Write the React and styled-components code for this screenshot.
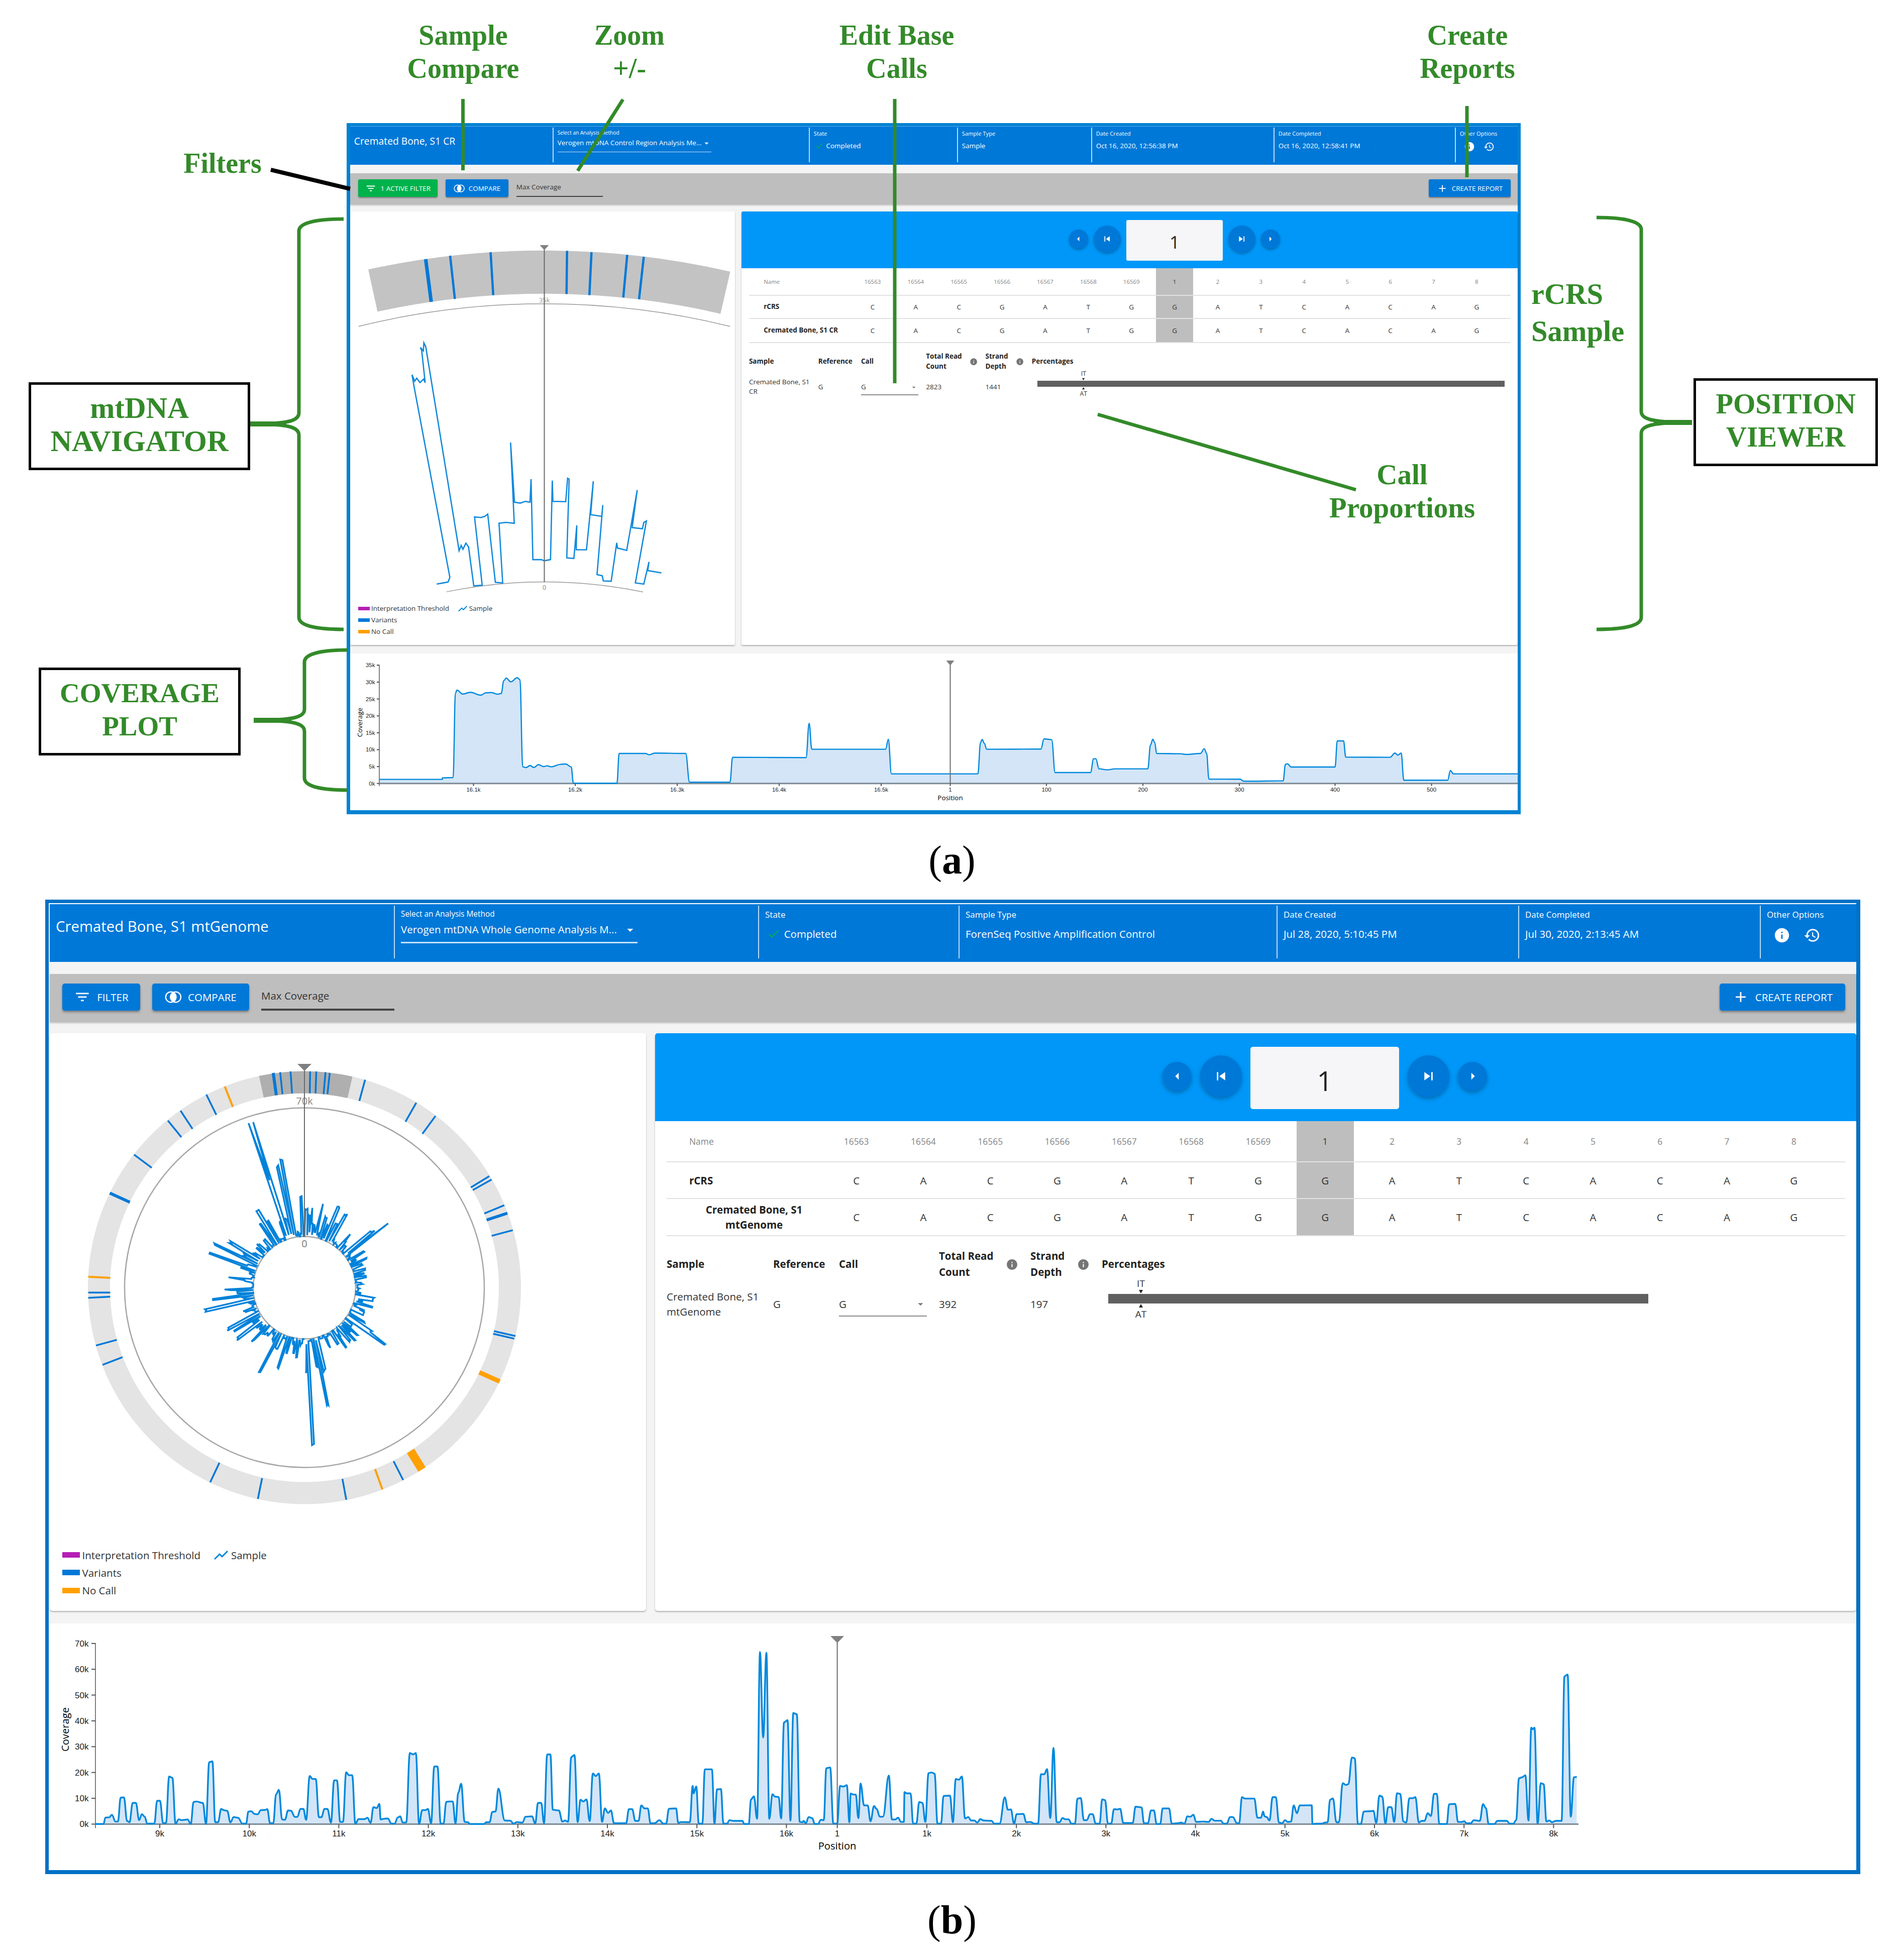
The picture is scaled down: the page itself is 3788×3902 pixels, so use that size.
import React from "react";
import styled, { createGlobalStyle, ThemeProvider } from "styled-components";
import {
  MdAdd,
  MdArrowDropDown,
  MdArrowLeft,
  MdArrowRight,
  MdCheck,
  MdFilterList,
  MdHistory,
  MdInfo,
  MdSkipNext,
  MdSkipPrevious,
} from "react-icons/md";

const BLUE = "#0078d8";
const LINE = "#0088dc";
const ORANGE = "#ffa000";
const GREEN = "#338a29";

// every size in the dashboard is written for the large one and scaled
const u = (n) => (p) => `${(n * p.theme.s).toFixed(2)}px`;

const controlRegion = {
  s: 0.65,
  font: 13.5,
  width: 2337,
  height: 1376,
  border: "6px 6px 8px 7px",
  borderColor: "#0082d2",
  pad: "1px 0 0 0",
  padColor: "#59acea",
  headerHeight: 76,
  headerCols: "403px 510px 295px 267px 363px 361px 1fr",
  gapTop: 17,
  toolbarHeight: 62,
  gapBottom: 14,
  panelHeight: 863,
  panelCols: "766px 1545px",
  panelGap: 13,
  footGap: 17,
  navHeight: 113,
  navPad: 652,
  rows: "55px 46px 48px",
  baseCol: "203px repeat(15, 85.9px)",
  barWidth: 930,
  barPad: 11,
  markAt: 92,
  navigatorView: [697, 421, 766, 779],
  plotView: [697, 1301, 2324, 312],
};

const wholeGenome = {
  s: 1,
  font: 20.5,
  width: 3613,
  height: 1940,
  border: "7px 8px 8px 7px",
  borderColor: "#0071c6",
  pad: "2px 0 0 2px",
  padColor: "#fff",
  headerHeight: 115,
  headerCols: "685px 725px 399px 633px 481px 481px 1fr",
  gapTop: 24,
  toolbarHeight: 96,
  gapBottom: 22,
  panelHeight: 1150,
  panelCols: "1187px 2391px",
  panelGap: 18,
  footGap: 25,
  navHeight: 175,
  navPad: 1010,
  rows: "82px 73px 74px",
  baseCol: "311px repeat(15, 133.3px)",
  barWidth: 1075,
  barPad: 13,
  markAt: 65,
  navigatorView: [99, 2057, 1187, 1021],
  plotView: [99, 3232, 3596, 491],
};

const positions = ["16563", "16564", "16565", "16566", "16567", "16568", "16569", "1", "2", "3", "4", "5", "6", "7", "8"];
const bases = "CACGATGGATCACAG".split("");

const toPoints = (str) => str.trim().split(/\s+/).map((p) => p.split(",").map(Number));
const place = (x0, y0, kx, ky, str) => toPoints(str).map(([x, y]) => [x0 + x * kx, y0 + y * ky]);
const join = (pts) => pts.map(([x, y]) => `${x.toFixed(1)},${y.toFixed(1)}`).join(" ");

// rounds the shoulders of each peak: a flat tangent at every reading
const smooth = (pts) =>
  pts.reduce((d, [x, y], i) => {
    if (!i) return `${x.toFixed(1)} ${y.toFixed(1)}`;
    const [px, py] = pts[i - 1];
    const third = (x - px) * 0.4;
    return `${d}C${(px + third).toFixed(1)} ${py.toFixed(1)} ${(x - third).toFixed(1)} ${y.toFixed(1)} ${x.toFixed(1)} ${y.toFixed(1)}`;
  }, "");

/* ---------- coverage data ---------- */

const regionCoverage = [
  ...place(680, 1270, 0.7653, 0.3333, `98,845 262,845 262,836 290,834 296,330 300,312 315,335 335,325 362,342 375,328 390,326 405,336 415,332 422,255 428,240 440,262 457,238 464,250 471,770 480,774 490,762 500,774 512,757 525,768 535,764 545,770 570,755 583,753 597,770 603,868 716,868 722,690 790,690 800,698 815,688 895,690 905,862 1010,862 1017,713 1208,715 1216,510 1223,665 1415,665 1422,605 1430,812`),
  ...place(1860, 1270, 0.7653, 0.3333, `0,812 113,812 120,625 124,607 130,630 136,665 277,664 285,603 305,608 314,804 406,804 414,722 420,722 428,782 450,788 470,782 555,782 562,640 568,605 573,625 578,690 640,692 655,696 692,690 702,662 708,690 714,843 795,844 805,856 907,854 913,755 918,752 928,771 1042,771 1048,615 1064,615 1070,712 1185,713 1198,688 1205,700 1214,688 1221,850 1335,850 1342,792 1350,812 1517,812`),
];

const genomeCoverage = [
  ...place(80, 3200, 0.7972, 0.3444, `138,1252 158,1252 163,1215 172,1214 179,1199 188,1238 194,1238 201,1100 209,1098 217,1235 223,1242 231,1130 239,1130 247,1230 254,1195 261,1210 267,1250 285,1250 292,1118 299,1118 307,1247 314,1247 322,978 330,985 338,1250 346,1225 353,1230 368,1226 376,1252 383,1125 390,1122 406,1130 414,1252 422,895 430,890 437,1242 444,1242 452,1165 458,1172 467,1176 475,1243 483,1212 494,1216 505,1250 514,1250 520,1180 527,1178 535,1194 543,1196 551,1172 562,1171 567,1166 574,1248 582,1248 589,1080 596,1055 604,1226 611,1228 619,1174 626,1175 636,1211 642,1211 650,1165 657,1165 664,1228 673,975 680,992 688,992 696,1213 702,1213 710,1165 717,1165 726,1244 734,1000 741,1000 749,1240 756,1240 764,953 771,970 779,970 787,1252 795,1224 810,1224 817,1216 825,1245 832,1155 840,1160 847,1136 850,1226 858,1222 868,1220 877,1250 885,1250 893,1214 899,1208 905,1243 914,1243 923,842 931,850 938,842 946,1252 954,1172 962,1172 968,1165 976,1248 984,920 992,920 1000,1250 1007,1250 1014,1124 1022,1122 1030,1122 1037,1250 1044,1070 1051,1020 1060,1240 1068,1242 1073,1252 1108,1252 1114,1242 1122,1242 1129,1182 1137,1180 1144,1047 1160,1232 1174,1233 1182,1250 1190,1241 1204,1244 1212,1210 1228,1208 1236,1250 1243,1130 1251,1130 1258,1248 1266,850 1274,850 1280,1170 1295,1174 1304,1238 1311,1232 1318,1240 1326,865 1334,853 1342,1242 1349,1112 1356,1122 1364,1110 1372,1235 1380,960 1387,975 1395,960 1403,1240 1410,1162 1418,1188 1425,1174 1433,1248 1463,1248 1470,1166 1478,1166 1486,1234 1494,1234 1501,1145 1509,1162 1517,1162 1524,1248 1534,1248 1546,1230 1556,1250`),
  ...place(1250, 3200, 0.6378, 0.3444, `119,1250 128,1164 150,1162 157,1246 165,1241 193,1242 202,1032 205,1075 213,1035 221,1250 232,1250 240,936 262,936 270,1250 278,1052 290,1050 298,1250 309,1250 317,1230 330,1234 357,1234 363,1252 377,1252 384,1110 393,1092 403,1222 412,258 422,752 432,262 441,1222 451,1080 459,1094 470,1096 478,1220 487,665 498,652 507,1232 516,610 527,618 536,1240 545,1242 548,1234 555,1248 564,1212 575,1218 583,1252 593,1252 602,1228 611,1230 619,930 631,925 641,1250 653,1250 662,1032 672,1036 683,1028 691,1242 695,1076 704,1082 711,1082 719,1218 726,1018 737,1145 748,1145 757,1236 768,1148 776,1165 786,1210 796,1210 814,972 824,1226 834,1226 843,1216 852,1240 861,1240 863,1068 870,1075 882,1075 890,1250 900,1250 909,1125 919,1130 928,1240 938,958 948,954 957,962 966,1250 977,1250 985,1090 1005,1088 1014,1242 1023,992 1033,996 1042,978 1052,1220 1062,1212 1071,1232 1081,1232 1090,1244 1100,1224 1110,1232 1135,1234 1143,1250 1160,1250 1176,1098 1186,1170 1195,1168 1205,1250 1213,1195 1234,1194 1243,1242 1256,1240 1268,1250 1280,1250 1289,965 1299,965 1308,935 1318,1218 1328,812 1338,1242 1347,1242 1356,1218 1366,1225 1375,1225 1384,1250 1395,1250 1403,1105 1413,1102 1423,1230 1432,1230 1442,1195 1450,1195 1460,1250 1472,1250 1480,1110 1489,1114 1498,1250 1508,1250 1517,1166 1527,1168 1536,1164 1546,1246 1568,1246`),
  ...place(2200, 3200, 0.7015, 0.3444, `78,1246 86,1152 103,1156 110,1248 121,1248 130,1174 138,1174 146,1252 156,1252 163,1162 181,1162 189,1250 205,1248 215,1244 225,1250 233,1208 242,1210 250,1198 258,1240 278,1238 293,1240 302,1222 310,1233 328,1233 336,1250 345,1250 354,1212 362,1212 374,1248 380,1248 388,1097 396,1105 423,1105 432,1216 442,1216 448,1180 452,1208 458,1212 466,1232 475,1097 484,1097 493,1244 502,1248 510,1230 518,1240 527,1238 535,1145 544,1190 552,1145 586,1144 588,1252 600,1250 615,1250 625,1243 631,1243 638,1112 646,1104 656,1242 663,1242 674,1016 683,1026 690,1022 700,868 708,872 717,1252 725,1252 734,1180 752,1178 761,1176 769,1246 778,1088 786,1094 795,1250 803,1155 812,1155 820,1240 828,1074 837,1078 846,1238 854,1244 863,1103 872,1103 880,1097 890,1244 898,1234 906,1234 915,1190 924,1206 933,1078 941,1078 948,1252 969,1252 976,1138 993,1136 1001,1240 1012,1240 1019,1236 1025,1248 1037,1248 1046,1230 1063,1234 1072,1137 1080,1160 1088,1252 1104,1252 1113,1234 1140,1234 1147,1250 1158,1250 1166,1230 1174,988 1183,982 1192,970 1201,1232 1209,695 1213,704 1218,695 1227,1250 1236,1016 1244,1022 1252,1238 1260,1232 1268,1242 1278,1234 1295,1234 1303,398 1312,388 1321,1210 1330,982 1338,980`),
];

/* ---------- charts ---------- */

const Pointer = ({ x, top, tip, bottom, half }) => (
  <g>
    <line x1={x} x2={x} y1={tip} y2={bottom} stroke="#6b6b6b" strokeWidth="2" />
    <polygon points={`${x - half},${top} ${x + half},${top} ${x},${tip + 1}`} fill="#808080" />
  </g>
);

const CoveragePlot = ({ view, data, base, axisX, endX, yTicks, xTicks, labelX, labelY, titleY, pointer, tick, small, title }) => (
  <PlotSvg viewBox={view.join(" ")} width={view[2]} height={view[3]}>
    <path d={`M${data[0][0]} ${base}L${smooth(data)}V${base}Z`} fill="#d3e5f7" />
    <path d={`M${axisX - tick} ${yTicks[0][0]}H${axisX}V${base + tick}`} fill="none" stroke="#555" strokeWidth="1.5" />
    <line x1={axisX} x2={endX} y1={base} y2={base} stroke="#7f8c96" strokeWidth="3" />
    {yTicks.map(([y, text]) => (
      <g key={text}>
        <line x1={axisX - tick} x2={axisX} y1={y} y2={y} stroke="#555" strokeWidth="2" />
        <TickText x={axisX - tick * 1.7} y={y + small * 0.35} fontSize={small} textAnchor="end">{text}</TickText>
      </g>
    ))}
    {xTicks.map(([x, text]) => (
      <g key={text}>
        <line x1={x} x2={x} y1={base} y2={base + tick} stroke="#555" strokeWidth="2" />
        <TickText x={x} y={labelY + small * 0.36} fontSize={small} textAnchor="middle">{text}</TickText>
      </g>
    ))}
    <path d={`M${smooth(data)}`} fill="none" stroke={LINE} strokeWidth={small > 12 ? 3.4 : 2.4} strokeLinejoin="round" />
    <AxisText x={pointer.x} y={titleY + title * 0.35} fontSize={title} textAnchor="middle">Position</AxisText>
    <AxisText transform={`translate(${labelX[0] + title * 0.3} ${labelX[1]}) rotate(-90)`} fontSize={title} textAnchor="middle">
      Coverage
    </AxisText>
    <Pointer {...pointer} bottom={base} />
  </PlotSvg>
);

const RegionPlot = () => (
  <CoveragePlot
    view={controlRegion.plotView}
    data={regionCoverage}
    base={1559.7}
    axisX={755}
    endX={3021}
    yTicks={["35k", "30k", "25k", "20k", "15k", "10k", "5k", "0k"].map((t, i) => [1324.3 + i * 33.63, t])}
    xTicks={[[942.5, "16.1k"], [1145, "16.2k"], [1348, "16.3k"], [1551, "16.4k"], [1754, "16.5k"], [1891.5, "1"], [2083, "100"], [2275, "200"], [2467, "300"], [2657.5, "400"], [2849.5, "500"]]}
    labelX={[717, 1438]}
    labelY={1572}
    titleY={1588}
    pointer={{ x: 1891.5, top: 1315, tip: 1324, half: 8 }}
    tick={5}
    small={11.5}
    title={13.4}
  />
);

const GenomePlot = () => (
  <CoveragePlot
    view={wholeGenome.plotView}
    data={genomeCoverage}
    base={3631.5}
    axisX={190}
    endX={3142}
    yTicks={["70k", "60k", "50k", "40k", "30k", "20k", "10k", "0k"].map((t, i) => [3271.8 + i * 51.38, t])}
    xTicks={[
      ...["9k", "10k", "11k", "12k", "13k", "14k", "15k", "16k"].map((t, i) => [318 + i * 178.2, t]),
      [1666.6, "1"],
      ...["1k", "2k", "3k", "4k", "5k", "6k", "7k", "8k"].map((t, i) => [1845 + i * 178.2, t]),
    ]}
    labelX={[131, 3443]}
    labelY={3650}
    titleY={3675}
    pointer={{ x: 1666.6, top: 3257, tip: 3270, half: 13.5 }}
    tick={8}
    small={17}
    title={20.2}
  />
);

const polar = (cx, cy, r, deg) => {
  const a = (deg * Math.PI) / 180;
  return [cx + r * Math.sin(a), cy - r * Math.cos(a)];
};

const arc = (cx, cy, r, from, to) => {
  const [x1, y1] = polar(cx, cy, r, from);
  const [x2, y2] = polar(cx, cy, r, to);
  return `M${x1} ${y1}A${r} ${r} 0 0 1 ${x2} ${y2}`;
};

const regionMarks = place(680, 400, 0.523, 0.574, `320,202 341,350 413,190 431,340 567,178 577,327 858,173 856,323 951,178 943,327 1087,187 1072,335 1150,194 1132,341`);
const regionTrace = place(680, 400, 0.523, 0.574, `362,1329 380,1326 405,1322 412,1306 275,640 268,603 278,625 286,615 298,630 312,618 318,630 305,520 300,508 311,520 313,492 320,505 443,1190 447,1213 455,1195 462,1208 473,1187 483,1200 503,1335 535,1333 506,1096 530,1098 545,1094 556,1086 585,1323 613,1325 599,1118 625,1115 657,1118 643,838 658,1045 680,1048 700,1042 717,1045 721,965 728,1244 760,1244 771,1248 795,1244 802,970 804,1042 853,1043 860,962 866,965 857,1238 884,1240 895,1125 893,1210 932,1210 958,972 948,1088 990,1094 994,1055 972,1296 992,1300 996,1318 1026,1319 1047,1186 1050,1204 1085,1212 1125,1003 1106,1133 1145,1137 1150,1115 1160,1110 1118,1325 1150,1329 1170,1252 1165,1282 1217,1290`);

const RegionNavigator = () => {
  const cx = 1083.5;
  const cy = 2143.7;
  const view = controlRegion.navigatorView;
  return (
    <PlotSvg viewBox={view.join(" ")} width={view[2]} height={view[3]}>
      <path d={arc(cx, cy, 1602, -12.3, 13)} fill="none" stroke="#c3c3c3" strokeWidth="86" />
      {regionMarks.filter((_, i) => i % 2 === 0).map(([x, y], i) => (
        <line key={x} x1={x} y1={y} x2={regionMarks[i * 2 + 1][0]} y2={regionMarks[i * 2 + 1][1]} stroke={BLUE} strokeWidth={i ? 4.5 : 7} />
      ))}
      <AxisText x={cx} y="602" fontSize="13" textAnchor="middle" fill="#999">35k</AxisText>
      <path d={arc(cx, cy, 1539, -13.9, 13.9)} fill="none" stroke="#999" strokeWidth="1.5" />
      <path d={arc(cx, cy, 985, -11.4, 11.5)} fill="none" stroke="#999" strokeWidth="1.5" />
      <AxisText x={cx} y="1174" fontSize="13" textAnchor="middle" fill="#888">0</AxisText>
      <polyline points={join(regionTrace)} fill="none" stroke="#1189dc" strokeWidth="2.6" />
      <Pointer x={cx} top={488} tip={497} bottom={1159} half={9} />
    </PlotSvg>
  );
};

// x1,y1 x2,y2 of each mark over the ring
const ringMarks = (str) => place(100, 2060, 0.7653, 0.7526, str);
const variantMarks = ringMarks(`598,99 604,157 625,97 629,155 676,97 675,155 692,97 690,155 716,99 711,157 727,101 721,157 819,119 804,175 952,180 924,230 1002,215 968,262 1142,374 1094,404 1148,383 1099,411 1181,451 1129,473 1203,517 1148,532 1210,797 1154,784 1207,804 1152,791 918,1178 893,1128 770,1230 760,1175 540,1228 551,1173 416,1184 440,1132 136,873 188,853 119,822 173,807 99,696 156,693 99,682 156,682 218,317 264,352 306,227 341,271 339,201 370,249 406,158 432,212`);
const wideVariants = ringMarks(`580,101 588,160 1189,472 1135,490 155,419 207,443`);
const noCallMarks = ringMarks(`454,137 475,191 99,640 156,643 864,1203 845,1149`);
const wideNoCalls = ringMarks(`1116,893 1169,917`);
const widestNoCall = ringMarks(`937,1101 967,1150`);

const MarkSet = ({ marks, color, width }) =>
  marks.filter((_, i) => i % 2 === 0).map(([x, y], i) => (
    <line key={i} x1={x} y1={y} x2={marks[i * 2 + 1][0]} y2={marks[i * 2 + 1][1]} stroke={color} strokeWidth={width} />
  ));

const GenomeNavigator = () => {
  const cx = 606;
  const cy = 2563.5;
  const view = wholeGenome.navigatorView;
  // the same coverage wrapped round the circular genome
  const trace = genomeCoverage.map(([x, y]) =>
    polar(cx, cy, 102 + ((3631.5 - y) / 359.7) * 256, ((x - 1666.6) / 178.2 / 16.569) * 360)
  );
  return (
    <PlotSvg viewBox={view.join(" ")} width={view[2]} height={view[3]}>
      <circle cx={cx} cy={cy} r="409" fill="none" stroke="#e4e4e4" strokeWidth="44" />
      <path d={arc(cx, cy, 409, -12.1, 12.8)} fill="none" stroke="#afafaf" strokeWidth="44" />
      <MarkSet marks={variantMarks} color={BLUE} width={3.5} />
      <MarkSet marks={wideVariants} color={BLUE} width={6} />
      <MarkSet marks={noCallMarks} color={ORANGE} width={4} />
      <MarkSet marks={wideNoCalls} color={ORANGE} width={9} />
      <MarkSet marks={widestNoCall} color={ORANGE} width={17} />
      <circle cx={cx} cy={cy} r="358" fill="none" stroke="#a6a6a6" strokeWidth="2.5" />
      <circle cx={cx} cy={cy} r="102" fill="none" stroke="#a6a6a6" strokeWidth="2.5" />
      <AxisText x={cx} y="2199" fontSize="20" textAnchor="middle" fill="#888">70k</AxisText>
      <AxisText x={cx} y="2482.5" fontSize="20" textAnchor="middle" fill="#777">0</AxisText>
      <polyline points={join(trace)} fill="none" stroke="#0082da" strokeWidth="3.4" />
      <Pointer x={cx} top={2118} tip={2131} bottom={2462} half={14} />
    </PlotSvg>
  );
};

/* ---------- dashboard ---------- */

const CompareIcon = () => (
  <svg viewBox="0 0 32 32" width="1em" height="1em">
    <circle cx="11.5" cy="16" r="9.8" fill="none" stroke="#fff" strokeWidth="2.2" />
    <circle cx="20.500" cy="16" r="9.8" fill="none" stroke="#fff" strokeWidth="2.2" />
    <ellipse cx="16" cy="16" rx="5.4" ry="9" fill="#fff" />
  </svg>
);

const Marker = ({ up }) => (
  <MarkerSvg viewBox="0 0 8 9">
    <path d={up ? "M4 1L8 8H0Z" : "M0 1H8L4 8Z"} fill="#222" />
  </MarkerSvg>
);

const Dashboard = ({ theme, title, method, filterLabel, sampleType, created, completed, sampleName, splitName, reads, depth, Navigator, Plot }) => (
  <ThemeProvider theme={theme}>
    <Frame>
      <Header>
        <Title>{title}</Title>
        <HeaderCell>
          <MethodLabel>Select an Analysis Method</MethodLabel>
          <MethodSelect>
            {method}
            <MdArrowDropDown />
          </MethodSelect>
        </HeaderCell>
        <HeaderCell>
          <Label>State</Label>
          <Value>
            <MdCheck />
            Completed
          </Value>
        </HeaderCell>
        <HeaderCell>
          <Label>Sample Type</Label>
          <Value>{sampleType}</Value>
        </HeaderCell>
        <HeaderCell>
          <Label>Date Created</Label>
          <Value>{created}</Value>
        </HeaderCell>
        <HeaderCell>
          <Label>Date Completed</Label>
          <Value>{completed}</Value>
        </HeaderCell>
        <HeaderCell>
          <Label>Other Options</Label>
          <Options>
            <MdInfo />
            <MdHistory />
          </Options>
        </HeaderCell>
      </Header>

      <Toolbar>
        <Button $green={theme.s < 1} $width={theme.s < 1 ? 243 : 155}>
          <MdFilterList />
          {filterLabel}
        </Button>
        <Button $width={193}>
          <CompareIcon />
          COMPARE
        </Button>
        <ZoomField>Max Coverage</ZoomField>
        <Spacer />
        <Button $width={250}>
          <MdAdd />
          CREATE REPORT
        </Button>
      </Toolbar>

      <Panels>
        <Panel>
          <Navigator />
          <Legend>
            <LegendRow>
              <Swatch $color="#b51fb5" />
              <span>Interpretation Threshold</span>
              <TraceIcon viewBox="0 0 29 18">
                <path d="M1 17L11 7L16 12L27 1" fill="none" stroke={LINE} strokeWidth="3" />
              </TraceIcon>
              <span>Sample</span>
            </LegendRow>
            <LegendRow>
              <Swatch $color={BLUE} />
              <span>Variants</span>
            </LegendRow>
            <LegendRow>
              <Swatch $color={ORANGE} />
              <span>No Call</span>
            </LegendRow>
          </Legend>
        </Panel>

        <Panel>
          <PositionNav>
            <Round $size={58}><MdArrowLeft /></Round>
            <Round $size={83}><MdSkipPrevious /></Round>
            <PositionInput>1</PositionInput>
            <Round $size={83}><MdSkipNext /></Round>
            <Round $size={58}><MdArrowRight /></Round>
          </PositionNav>
          <BaseTable>
            <BaseRow $muted>
              <RowName>Name</RowName>
              {positions.map((p, i) => <Base key={p} $active={i === 7}>{p}</Base>)}
            </BaseRow>
            <BaseRow>
              <RowName $bold>rCRS</RowName>
              {bases.map((b, i) => <Base key={i} $active={i === 7}>{b}</Base>)}
            </BaseRow>
            <BaseRow>
              <RowName $bold $split={splitName}>{sampleName}</RowName>
              {bases.map((b, i) => <Base key={i} $active={i === 7}>{b}</Base>)}
            </BaseRow>
          </BaseTable>
          <Details>
            <DetailHead>
              <span>Sample</span>
              <span>Reference</span>
              <span>Call</span>
              <HeadInfo>Total Read<br />Count<MdInfo /></HeadInfo>
              <HeadInfo>Strand<br />Depth<MdInfo /></HeadInfo>
              <span>Percentages</span>
            </DetailHead>
            <DetailRow>
              <SampleName>{sampleName}</SampleName>
              <span>G</span>
              <CallSelect>G<MdArrowDropDown /></CallSelect>
              <span>{reads}</span>
              <span>{depth}</span>
              <Percentages>
                <Mark><span>IT</span><Marker /></Mark>
                <Bar />
                <Mark><Marker up /><span>AT</span></Mark>
              </Percentages>
            </DetailRow>
          </Details>
        </Panel>
      </Panels>

      <PlotPanel>
        <Plot />
      </PlotPanel>
    </Frame>
  </ThemeProvider>
);

/* ---------- annotations ---------- */

const brace = (end, spine, tip, top, mid, bottom) => {
  const d = Math.sign(end - spine);
  return `M${end} ${top}C${spine + d * 40} ${top} ${spine} ${top + 6} ${spine} ${top + 24}V${mid - 22}C${spine} ${mid - 6} ${spine - d * 22} ${mid} ${tip} ${mid}C${spine - d * 22} ${mid} ${spine} ${mid + 6} ${spine} ${mid + 22}V${bottom - 24}C${spine} ${bottom - 6} ${spine + d * 40} ${bottom} ${end} ${bottom}`;
};

const Callouts = () => (
  <Overlay viewBox="0 0 3788 1640">
    <g fill="none" stroke={GREEN} strokeWidth="7">
      <path d="M921.500 197V339M1240 198L1150 340M1781 197V763M2920 211V353M2185 825L2699 975" />
      <path d={brace(684, 595, 498, 436, 844, 1253)} />
      <path d={brace(692, 606, 505, 1294, 1434, 1573)} />
      <path d={brace(3178, 3267, 3368, 433, 841, 1253)} />
      <path d="M498 844H570M3368 841H3292M505 1434H580" strokeWidth="10" />
    </g>
    <path d="M539 338L697 376" stroke="#000" strokeWidth="8" />
  </Overlay>
);

const App = () => {
  return (
    <Page>
      <Global />
      <FigureA>
        <Dashboard
          theme={controlRegion}
          title="Cremated Bone, S1 CR"
          method="Verogen mtDNA Control Region Analysis Me..."
          filterLabel="1 ACTIVE FILTER"
          sampleType="Sample"
          created="Oct 16, 2020, 12:56:38 PM"
          completed="Oct 16, 2020, 12:58:41 PM"
          sampleName="Cremated Bone, S1 CR"
          reads="2823"
          depth="1441"
          Navigator={RegionNavigator}
          Plot={RegionPlot}
        />
        <Callouts />
        <Note $x={922} $y={37}>Sample<br />Compare</Note>
        <Note $x={1253} $y={37}>Zoom<br />+/-</Note>
        <Note $x={1785} $y={37}>Edit Base<br />Calls</Note>
        <Note $x={2921} $y={37}>Create<br />Reports</Note>
        <Note $x={443} $y={292}>Filters</Note>
        <Note $x={2791} $y={912} $size={57}>Call<br />Proportions</Note>
        <SideNote>rCRS<br />Sample</SideNote>
        <BoxNote $x={57} $y={761} $w={441} $h={175} $size={59}>mtDNA<br />NAVIGATOR</BoxNote>
        <BoxNote $x={77} $y={1329} $w={402} $h={175} $size={55}>COVERAGE<br />PLOT</BoxNote>
        <BoxNote $x={3371} $y={753} $w={367} $h={175} $size={57}>POSITION<br />VIEWER</BoxNote>
      </FigureA>
      <Caption>(<b>a</b>)</Caption>
      <FigureB>
        <Dashboard
          theme={wholeGenome}
          title="Cremated Bone, S1 mtGenome"
          method="Verogen mtDNA Whole Genome Analysis M..."
          filterLabel="FILTER"
          sampleType="ForenSeq Positive Amplification Control"
          created="Jul 28, 2020, 5:10:45 PM"
          completed="Jul 30, 2020, 2:13:45 AM"
          sampleName="Cremated Bone, S1 mtGenome"
          splitName
          reads="392"
          depth="197"
          Navigator={GenomeNavigator}
          Plot={GenomePlot}
        />
      </FigureB>
      <Caption>(<b>b</b>)</Caption>
    </Page>
  );
};

export default App;

const Global = createGlobalStyle`
  * {
    box-sizing: border-box;
  }
  body {
    margin: 0;
    background: #fff;
  }
`;
const Page = styled.div`
  width: 3788px;
  height: 3902px;
  overflow: hidden;
  display: flex;
  flex-direction: column;
`;
const FigureA = styled.div`
  position: relative;
  padding: 245px 0 0 690px;
`;
const FigureB = styled.div`
  padding-left: 90px;
`;
const Caption = styled.div`
  height: 170px;
  padding: 12px 0 0 2px;
  display: flex;
  align-items: center;
  justify-content: center;
  font-family: "Liberation Serif", serif;
  font-size: 80px;
  color: #000;
`;
const Overlay = styled.svg`
  position: absolute;
  left: 0;
  top: 0;
  width: 3788px;
  height: 1640px;
`;
const Note = styled.div`
  position: absolute;
  left: ${(p) => p.$x}px;
  top: ${(p) => p.$y}px;
  transform: translateX(-50%);
  white-space: nowrap;
  text-align: center;
  font: bold ${(p) => p.$size || 56}px/66px "Liberation Serif", serif;
  color: ${GREEN};
`;
const SideNote = styled(Note)`
  left: 3048px;
  top: 549px;
  transform: none;
  text-align: left;
  font-size: 58.5px;
  line-height: 74px;
`;
const BoxNote = styled(Note)`
  display: flex;
  align-items: center;
  justify-content: center;
  transform: none;
  width: ${(p) => p.$w}px;
  height: ${(p) => p.$h}px;
  padding-bottom: 8px;
  border: 5px solid #000;
`;

const Frame = styled.div`
  width: ${(p) => p.theme.width}px;
  height: ${(p) => p.theme.height}px;
  border: solid ${(p) => p.theme.borderColor};
  border-width: ${(p) => p.theme.border};
  padding: ${(p) => p.theme.pad};
  background: linear-gradient(${(p) => p.theme.padColor} 2px, #f4f4f4 2px);
  font-family: "Open Sans", sans-serif;
  font-size: ${(p) => p.theme.font}px;
  color: #333;
`;
const Header = styled.div`
  height: ${(p) => p.theme.headerHeight}px;
  padding: ${u(3)} 0 ${u(7)};
  display: grid;
  grid-template-columns: ${(p) => p.theme.headerCols};
  background: ${BLUE};
  color: #fff;
  white-space: nowrap;
`;
const Title = styled.div`
  padding-left: ${u(12)};
  line-height: ${u(83)};
  font-size: 1.43em;
`;
const HeaderCell = styled.div`
  padding-left: ${u(12)};
  border-left: 2px solid #b9dcf6;
`;
const Label = styled.div`
  height: ${u(36)};
  line-height: ${u(36)};
  font-size: 0.83em;
`;
const MethodLabel = styled(Label)`
  height: ${u(34)};
  line-height: ${u(33)};
  font-size: 0.752em;
`;
const Value = styled.div`
  display: flex;
  align-items: center;
  height: ${u(40)};
  line-height: ${u(40)};

  svg {
    margin: 0 ${u(7)} 0 ${u(3)};
    font-size: 1.35em;
    color: #00b050;
  }
`;
const MethodSelect = styled.div`
  width: ${u(471)};
  height: ${u(41)};
  display: flex;
  justify-content: space-between;
  line-height: ${u(27)};
  border-bottom: ${u(3)} solid #c3e2f8;

  svg {
    font-size: 1.4em;
  }
`;
const Options = styled.div`
  display: flex;
  gap: ${u(26)};
  padding: ${u(6)} 0 0 ${u(13)};
  font-size: ${u(34)};
`;
const Toolbar = styled.div`
  height: ${(p) => p.theme.toolbarHeight}px;
  margin: ${(p) => p.theme.gapTop}px 0 ${(p) => p.theme.gapBottom}px;
  padding: 0 ${u(22)} ${u(4)} ${u(25)};
  display: flex;
  align-items: center;
  gap: ${u(24)};
  background: #bebebe;
  box-shadow: 0 2px 3px rgba(0, 0, 0, 0.2);
`;
const Button = styled.div`
  width: ${(p) => p.$width * p.theme.s}px;
  height: ${u(54)};
  display: flex;
  align-items: center;
  justify-content: center;
  gap: ${u(12)};
  border-radius: ${u(5)};
  background: ${(p) => (p.$green ? "#00b24c" : BLUE)};
  box-shadow: 0 ${u(3)} ${u(4)} rgba(0, 0, 0, 0.35);
  color: #fff;
  white-space: nowrap;

  svg {
    font-size: 1.65em;
  }
`;
const ZoomField = styled.div`
  width: ${u(265)};
  height: ${u(53)};
  padding-bottom: ${u(4)};
  line-height: ${u(47)};
  border-bottom: ${u(4)} solid #444;
`;
const Spacer = styled.div`
  flex: 1;
`;
const Panels = styled.div`
  height: ${(p) => p.theme.panelHeight}px;
  margin-bottom: ${(p) => p.theme.footGap}px;
  display: grid;
  grid-template-columns: ${(p) => p.theme.panelCols};
  gap: ${(p) => p.theme.panelGap}px;
`;
const Panel = styled.div`
  overflow: hidden;
  border-radius: ${u(5)};
  background: #fff;
  box-shadow: 0 2px 3px rgba(0, 0, 0, 0.28);
`;
const PlotPanel = styled.div`
  background: #fff;
`;
const PlotSvg = styled.svg`
  display: block;
`;
const AxisText = styled.text`
  font-family: "Open Sans", sans-serif;
`;
const TickText = styled.text`
  font-family: "Liberation Sans", sans-serif;
  fill: #222;
`;
const Legend = styled.div`
  padding-left: ${u(24.5)};
`;
const LegendRow = styled.div`
  height: ${u(35.3)};
  display: flex;
  align-items: center;
  gap: ${u(5)};
`;
const Swatch = styled.div`
  width: ${u(35)};
  height: ${u(11)};
  background: ${(p) => p.$color};
`;
const TraceIcon = styled.svg`
  width: ${u(29)};
  height: ${u(18)};
  margin-left: ${u(22)};
`;

const PositionNav = styled.div`
  height: ${(p) => p.theme.navHeight}px;
  padding: 0 0 ${u(4)} ${(p) => p.theme.navPad}px;
  display: flex;
  align-items: center;
  gap: ${u(17)};
  background: #0097f8;
`;
const Round = styled.div`
  width: ${(p) => p.$size * p.theme.s}px;
  height: ${(p) => p.$size * p.theme.s}px;
  display: flex;
  align-items: center;
  justify-content: center;
  border-radius: 50%;
  background: ${BLUE};
  box-shadow: 0 ${u(4)} ${u(8)} rgba(0, 0, 0, 0.28);
  color: #fff;
  font-size: ${u(33)};
`;
const PositionInput = styled.div`
  width: ${u(296)};
  height: ${u(124)};
  margin-top: ${u(7)};
  padding-top: ${u(9)};
  display: flex;
  align-items: center;
  justify-content: center;
  border-radius: ${u(5)};
  background: #f6f5f7;
  color: #222;
  font-size: ${u(54)};
`;
const BaseTable = styled.div`
  margin: 0 ${u(22)} 0 ${u(23)};
  display: grid;
  grid-template-rows: ${(p) => p.theme.rows};
`;
const BaseRow = styled.div`
  display: grid;
  grid-template-columns: ${(p) => p.theme.baseCol};
  border-bottom: 2px solid #e2e2e2;
  color: ${(p) => (p.$muted ? "#858585" : "#333")};
  font-size: ${(p) => (p.$muted ? "0.85em" : "1em")};
`;
const RowName = styled.div`
  display: flex;
  align-items: center;
  padding-left: ${(p) => (p.$split ? 62 : 45) * p.theme.s}px;
  padding-right: ${(p) => (p.$split ? 25 : 0)}px;
  text-align: ${(p) => (p.$split ? "center" : "left")};
  font-weight: ${(p) => (p.$bold ? 700 : 400)};
  color: ${(p) => (p.$bold ? "#222" : "inherit")};
  white-space: ${(p) => (p.$split ? "normal" : "nowrap")};
  line-height: ${u(30)};
`;
const Base = styled.div`
  display: flex;
  align-items: center;
  justify-content: center;
  margin: 0 ${u(9.6)};
  background: ${(p) => (p.$active ? "#bebebe" : "none")};
  color: ${(p) => (p.$active ? "#333" : "inherit")};
`;
const Details = styled.div`
  padding: ${u(24)} 0 0 ${u(23)};
`;
const DetailHead = styled.div`
  height: ${u(63)};
  display: grid;
  grid-template-columns: ${u(212)} ${u(131)} ${u(199)} ${u(182)} ${u(142)} 1fr;
  align-items: center;
  line-height: ${u(31.5)};
  font-weight: 700;
  color: #222;
`;
const HeadInfo = styled.div`
  position: relative;

  svg {
    position: absolute;
    top: ${u(20)};
    right: ${u(24)};
    font-size: ${u(25)};
    color: #757575;
  }
`;
const DetailRow = styled(DetailHead)`
  height: ${u(60)};
  margin-top: ${u(15)};
  line-height: ${u(30)};
  font-weight: 400;
  color: #333;
`;
const SampleName = styled.div`
  width: ${u(195)};
`;
const CallSelect = styled.div`
  width: ${u(175)};
  height: ${u(50)};
  padding-top: ${u(10)};
  display: flex;
  justify-content: space-between;
  border-bottom: 2px solid #8c8c8c;

  svg {
    margin-top: ${u(3)};
    font-size: 1.2em;
    color: #777;
  }
`;
const Percentages = styled.div`
  padding-left: ${(p) => p.theme.barPad}px;
  margin-top: ${u(-20)};
`;
const Mark = styled.div`
  width: ${(p) => p.theme.markAt * 2}px;
  height: ${u(33)};
  display: flex;
  flex-direction: column;
  align-items: center;
  font-size: ${u(19)};
  line-height: ${u(24)};
`;
const MarkerSvg = styled.svg`
  width: ${u(8)};
  height: ${u(9)};
`;
const Bar = styled.div`
  width: ${(p) => p.theme.barWidth}px;
  height: ${u(19)};
  background: #606060;
`;
